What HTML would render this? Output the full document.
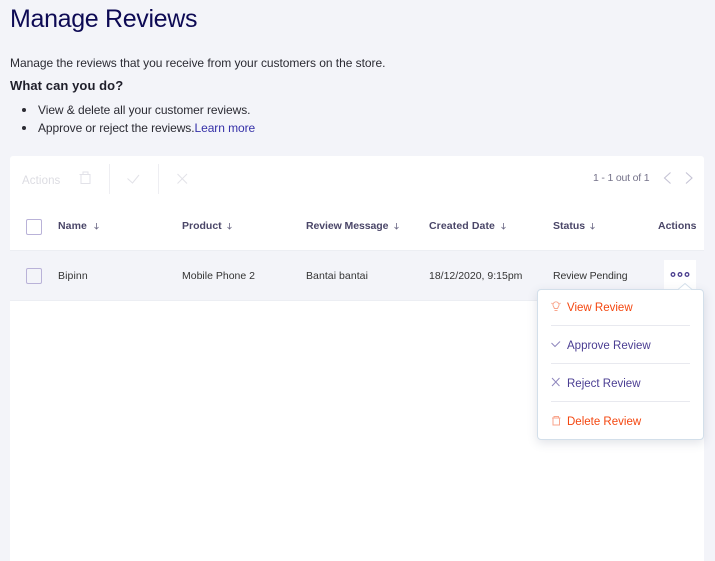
<!DOCTYPE html>
<html><head><meta charset="utf-8"><style>
html,body{margin:0;padding:0;width:715px;height:561px;overflow:hidden;background:#f3f4f9;font-family:"Liberation Sans",sans-serif}
.t{position:absolute;white-space:nowrap;line-height:16px}
.h{font-size:10.5px;font-weight:700;color:#4a4668;letter-spacing:0}
.c{font-size:10.5px;color:#333;letter-spacing:0}
.m{font-size:11.5px;letter-spacing:0}
.b{position:absolute}
svg{position:absolute;overflow:visible;fill:none}
.cb{position:absolute;left:26px;width:14px;height:14px;border:1px solid #b9b2d8;border-radius:2px;box-sizing:content-box}
.d{position:absolute;left:551px;width:139px;height:1px;background:#e8e9ef}
</style></head><body>
<div class="t" style="left:10px;top:3px;font-size:25px;line-height:32px;color:#0d0a54;letter-spacing:-.33px">Manage Reviews</div>
<div class="t" style="left:10px;top:55px;font-size:12px;color:#2b2b33;letter-spacing:-.04px">Manage the reviews that you receive from your customers on the store.</div>
<div class="t" style="left:10px;top:78px;font-size:13px;font-weight:700;color:#1f1f2b;letter-spacing:.08px">What can you do?</div>
<div class="b" style="left:22px;top:108px;width:4px;height:4px;border-radius:50%;background:#2b2b33"></div>
<div class="b" style="left:22px;top:126px;width:4px;height:4px;border-radius:50%;background:#2b2b33"></div>
<div class="t" style="left:38px;top:102px;font-size:12px;color:#2b2b33;letter-spacing:-.07px">View &amp; delete all your customer reviews.</div>
<div class="t" style="left:38px;top:120px;font-size:12px;color:#2b2b33;letter-spacing:-.075px">Approve or reject the reviews.<span style="color:#3530a8">Learn more</span></div>

<div class="b" style="left:10px;top:156px;width:694px;height:405px;background:#fff;border-radius:3px 3px 0 0"></div>
<div class="t" style="left:22px;top:173px;font-size:11.5px;color:#dcdce2;letter-spacing:.1px">Actions</div>
<svg style="left:0;top:0" width="715" height="561">
<g stroke="#e2e2e8" stroke-width="1"><path d="M79.500 174.500h11M83 174v-2h5v2M81 175v8.500h9V175"/><path d="M127.500 178.500l5 4.500 6.500-8"/><path d="M177.500 174l9.500 9.500M187 174l-9.500 9.500"/></g>
<g stroke="#eeeef2" stroke-width="1"><path d="M109.500 164v30M158.500 164v30"/></g>
<g stroke="#c5c3d5" stroke-width="1.1"><path d="M670.500 172.500l-6 5.500 6 5.500M686 172.500l6 5.500-6 5.500"/></g>
</svg>
<div class="t" style="left:593px;top:170px;font-size:10.5px;color:#75738a;letter-spacing:-.18px">1 - 1 out of 1</div>

<div class="cb" style="top:219px"></div>
<div class="t h" style="left:58px;top:218px;letter-spacing:.1px">Name</div>
<div class="t h" style="left:182px;top:218px">Product</div>
<div class="t h" style="left:306px;top:218px;letter-spacing:-.08px">Review Message</div>
<div class="t h" style="left:429px;top:218px;letter-spacing:.1px">Created Date</div>
<div class="t h" style="left:553px;top:218px">Status</div>
<div class="t h" style="left:658px;top:218px">Actions</div>
<svg style="left:0;top:0" width="715" height="561"><g stroke="#6a6784" stroke-width=".8"><path d="M96.500 223v6M94.500 227l2 2 2-2"/><path d="M229.500 223v6M227.500 227l2 2 2-2"/><path d="M396.500 223v6M394.500 227l2 2 2-2"/><path d="M503.500 223v6M501.500 227l2 2 2-2"/><path d="M592.500 223v6M590.500 227l2 2 2-2"/></g></svg>

<div class="b" style="left:10px;top:250px;width:694px;height:51px;background:#f3f4f9;border-top:1px solid #eceef3;border-bottom:1px solid #eceef3;box-sizing:border-box"></div>
<div class="cb" style="top:268px"></div>
<div class="t c" style="left:58px;top:268px;letter-spacing:.1px">Bipinn</div>
<div class="t c" style="left:182px;top:268px">Mobile Phone 2</div>
<div class="t c" style="left:306px;top:268px;letter-spacing:.05px">Bantai bantai</div>
<div class="t c" style="left:429px;top:268px">18/12/2020, 9:15pm</div>
<div class="t c" style="left:553px;top:268px;letter-spacing:-.1px">Review Pending</div>
<div class="b" style="left:664px;top:260px;width:32px;height:32px;background:#fff"></div>
<svg style="left:0;top:0" width="715" height="561"><g stroke="#4b3f8f" stroke-width="1.3"><circle cx="673" cy="274.500" r="1.800"/><circle cx="680" cy="274.500" r="1.800"/><circle cx="687" cy="274.500" r="1.800"/></g></svg>

<div class="b" style="left:537px;top:289px;width:167px;height:151px;box-sizing:border-box;background:#fff;border:1px solid #d3dfea;border-radius:4px;box-shadow:0 3px 10px rgba(70,80,110,.16)"></div>
<svg style="left:0;top:0" width="715" height="561"><path d="M678 289.500l7-6 7 6" fill="#fff" stroke="#d3dfea"/><path d="M679 290h12v1h-12z" fill="#fff"/>
<g stroke="#f9a68d" stroke-width="1"><path d="M553.500 306.500a3 3 0 1 1 5 0l-1 2h-3zM554.500 310.500h3M551.500 303l1 1M560.500 303l-1 1"/><path d="M552 418h8.500M554 418v-1.500h4.500v1.500M553 418.500v6.500h6.500v-6.500"/></g>
<g stroke="#8f87bd" stroke-width="1"><path d="M551.500 343l3.500 3.500 5-5"/><path d="M552 378l7.500 8M559.500 378l-7.500 8"/></g></svg>
<div class="t m" style="left:567px;top:300px;color:#f4460f">View Review</div>
<div class="d" style="top:325px"></div>
<div class="t m" style="left:567px;top:338px;color:#4a3d92">Approve Review</div>
<div class="d" style="top:363px"></div>
<div class="t m" style="left:567px;top:376px;color:#4a3d92">Reject Review</div>
<div class="d" style="top:401px"></div>
<div class="t m" style="left:567px;top:414px;color:#f4460f">Delete Review</div>
</body></html>
